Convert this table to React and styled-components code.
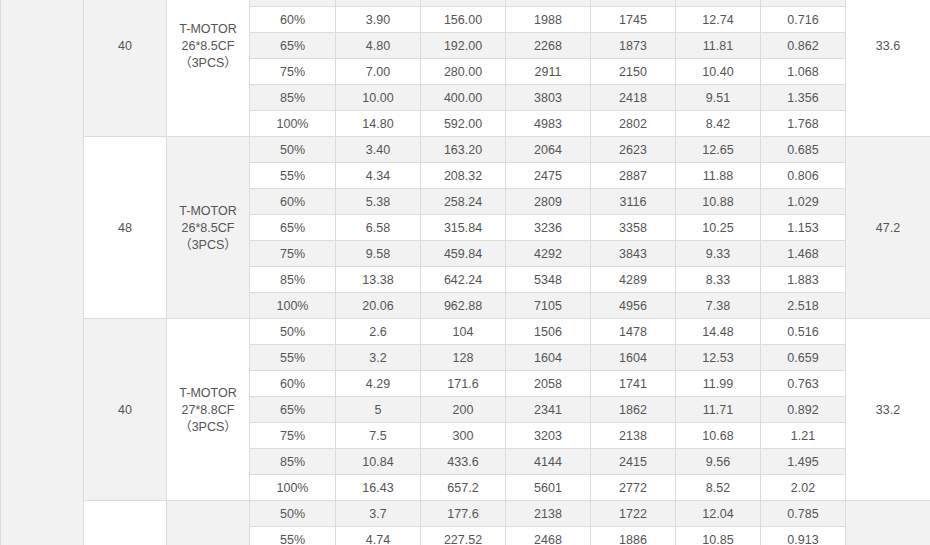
import React from "react";
import styled, { createGlobalStyle } from "styled-components";

const GlobalStyle = createGlobalStyle`
  html, body {
    margin: 0;
    padding: 0;
    background: #fff;
  }
`;

const Viewport = styled.div`
  width: 930px;
  height: 545px;
  overflow: hidden;
  background: #fff;
`;

const Table = styled.table`
  width: 930px;
  margin-top: -46px;
  border-collapse: collapse;
  table-layout: fixed;
  font-family: "Liberation Sans", Arial, "Noto Sans CJK SC", sans-serif;
  font-size: 12.5px;
  color: #555;
  text-spacing-trim: space-all;
`;

const Row = styled.tr`
  height: 26px;
`;

const Cell = styled.td`
  padding: 2px 0 0;
  border: 1px solid #dcdcdc;
  text-align: center;
  vertical-align: middle;
  line-height: 17px;
  background: ${(p) => (p.$shade ? "#f2f2f2" : "#fff")};
`;

const COLS = [83, 83, 83, 86, 85, 85, 85, 85, 85, 85, 85];

const groups = [
  {
    volt: "40",
    prop: "26*8.5CF",
    weight: "33.6",
    rows: [
      ["", "", "", "", "", "", ""],
      ["", "", "", "", "", "", ""],
      ["60%", "3.90", "156.00", "1988", "1745", "12.74", "0.716"],
      ["65%", "4.80", "192.00", "2268", "1873", "11.81", "0.862"],
      ["75%", "7.00", "280.00", "2911", "2150", "10.40", "1.068"],
      ["85%", "10.00", "400.00", "3803", "2418", "9.51", "1.356"],
      ["100%", "14.80", "592.00", "4983", "2802", "8.42", "1.768"],
    ],
  },
  {
    volt: "48",
    prop: "26*8.5CF",
    weight: "47.2",
    rows: [
      ["50%", "3.40", "163.20", "2064", "2623", "12.65", "0.685"],
      ["55%", "4.34", "208.32", "2475", "2887", "11.88", "0.806"],
      ["60%", "5.38", "258.24", "2809", "3116", "10.88", "1.029"],
      ["65%", "6.58", "315.84", "3236", "3358", "10.25", "1.153"],
      ["75%", "9.58", "459.84", "4292", "3843", "9.33", "1.468"],
      ["85%", "13.38", "642.24", "5348", "4289", "8.33", "1.883"],
      ["100%", "20.06", "962.88", "7105", "4956", "7.38", "2.518"],
    ],
  },
  {
    volt: "40",
    prop: "27*8.8CF",
    weight: "33.2",
    rows: [
      ["50%", "2.6", "104", "1506", "1478", "14.48", "0.516"],
      ["55%", "3.2", "128", "1604", "1604", "12.53", "0.659"],
      ["60%", "4.29", "171.6", "2058", "1741", "11.99", "0.763"],
      ["65%", "5", "200", "2341", "1862", "11.71", "0.892"],
      ["75%", "7.5", "300", "3203", "2138", "10.68", "1.21"],
      ["85%", "10.84", "433.6", "4144", "2415", "9.56", "1.495"],
      ["100%", "16.43", "657.2", "5601", "2772", "8.52", "2.02"],
    ],
  },
  {
    volt: "",
    prop: null,
    weight: "",
    rows: [
      ["50%", "3.7", "177.6", "2138", "1722", "12.04", "0.785"],
      ["55%", "4.74", "227.52", "2468", "1886", "10.85", "0.913"],
    ],
  },
];

const totalRows = groups.reduce((n, g) => n + g.rows.length, 0);

function PropLabel({ name }) {
  if (!name) return null;
  return (
    <>
      T-MOTOR
      <br />
      {name}
      <br />
      （3PCS）
    </>
  );
}

export default function App() {
  let index = 0;
  return (
    <Viewport>
      <GlobalStyle />
      <Table>
        <colgroup>
          {COLS.map((w, i) => (
            <col key={i} style={{ width: w }} />
          ))}
        </colgroup>
        <tbody>
          {groups.map((g, gi) => {
            const startShade = index % 2 === 1;
            return g.rows.map((r, ri) => {
              const shade = index % 2 === 1;
              const first = index === 0;
              index += 1;
              return (
                <Row key={`${gi}-${ri}`}>
                  {first && <Cell $shade rowSpan={totalRows} />}
                  {ri === 0 && (
                    <Cell $shade={!startShade} rowSpan={g.rows.length}>
                      {g.volt}
                    </Cell>
                  )}
                  {ri === 0 && (
                    <Cell $shade={startShade} rowSpan={g.rows.length}>
                      <PropLabel name={g.prop} />
                    </Cell>
                  )}
                  {r.map((v, ci) => (
                    <Cell key={ci} $shade={shade}>
                      {v}
                    </Cell>
                  ))}
                  {ri === 0 && (
                    <Cell $shade={startShade} rowSpan={g.rows.length}>
                      {g.weight}
                    </Cell>
                  )}
                </Row>
              );
            });
          })}
        </tbody>
      </Table>
    </Viewport>
  );
}
